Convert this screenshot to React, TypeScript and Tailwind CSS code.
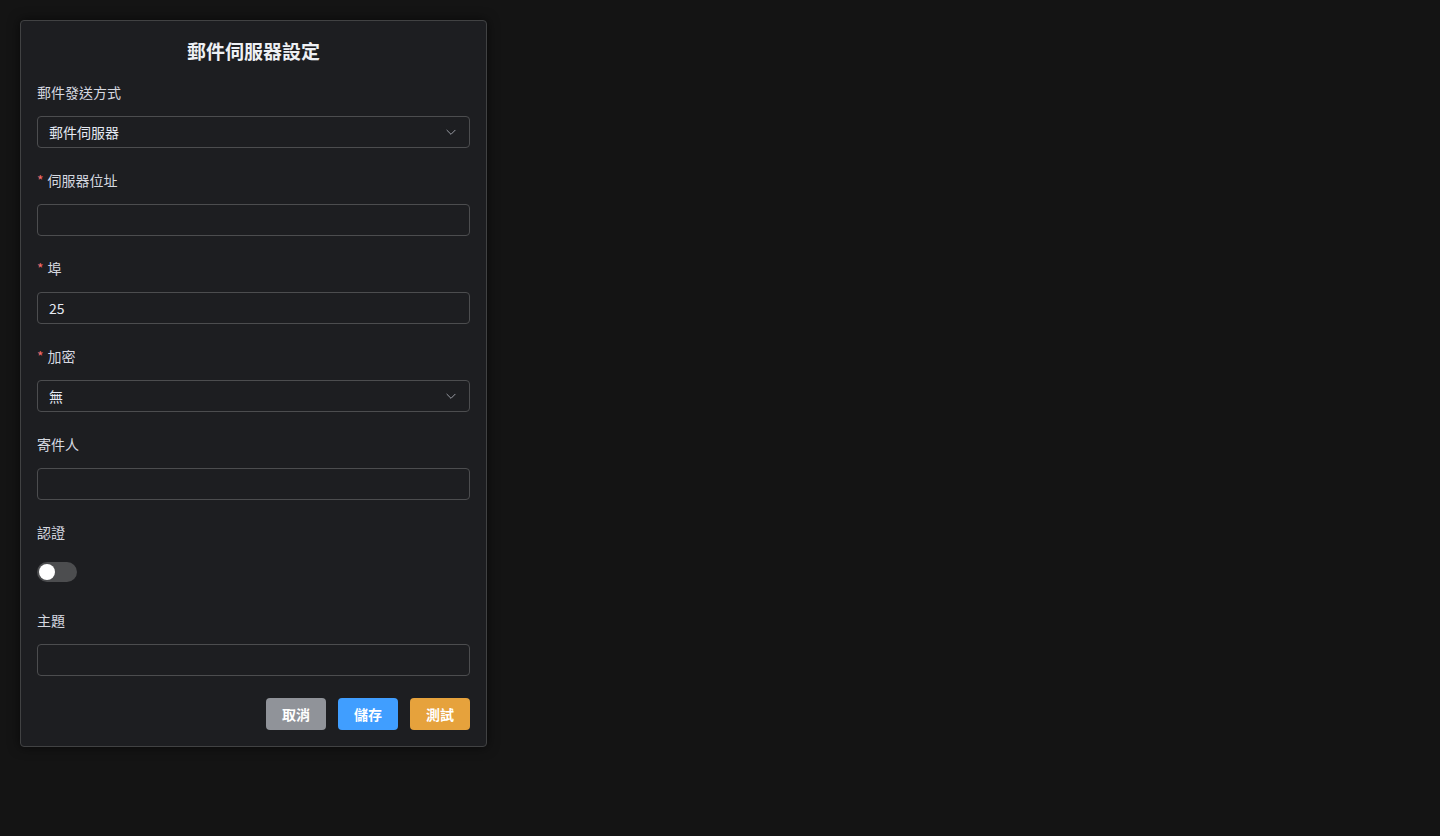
import { useState } from 'react';

const font = { fontFamily: '"Noto Sans CJK TC", "Noto Sans", sans-serif' };

const Label = ({ text, required }: { text: string; required?: boolean }) => (
    <div className="h-[34px] leading-[20px] text-[14px] text-[#d6d9e0]">
        {required && <span className="text-[#f56c6c] mr-[4px]">*</span>}
        {text}
    </div>
);

const Chevron = () => (
    <svg width="14" height="14" viewBox="0 0 24 24" fill="none" stroke="#a3a6ad" strokeWidth="1.6" strokeLinecap="round" strokeLinejoin="round">
        <path d="M5 9l7 7 7-7" />
    </svg>
);

const SelectBox = ({ value }: { value: string }) => (
    <div className="h-[32px] flex items-center justify-between px-[11px] border border-[#4c4d4f] rounded-[4px] text-[14px] leading-[20px] text-[#e5eaf3]">
        <span className="-mt-[1px]">{value}</span>
        <Chevron />
    </div>
);

const TextBox = ({ value = '' }: { value?: string }) => (
    <input
        defaultValue={value}
        className="w-full h-[32px] px-[11px] pb-[1px] bg-transparent border border-[#4c4d4f] rounded-[4px] text-[14px] text-[#e5eaf3] outline-none"
        style={font}
    />
);

const Field = ({ label, required, children, last }: { label: string; required?: boolean; children: React.ReactNode; last?: boolean }) => (
    <div className={last ? '' : 'mb-[22px]'}>
        <Label text={label} required={required} />
        {children}
    </div>
);

export default function App() {
    const [auth, setAuth] = useState(false);

    return (
        <div className="min-h-screen w-full bg-[#141414] p-[20px]" style={font}>
            <div className="w-[467px] bg-[#1d1e21] border border-[#414243] rounded-[4px] shadow-[0_0_12px_rgba(0,0,0,0.6)] px-[16px] pb-[16px]">
                <h2 className="h-[61px] flex items-center justify-center text-[19px] font-bold text-[#eef0f4]">郵件伺服器設定</h2>

                <Field label="郵件發送方式">
                    <SelectBox value="郵件伺服器" />
                </Field>
                <Field label="伺服器位址" required>
                    <TextBox />
                </Field>
                <Field label="埠" required>
                    <TextBox value="25" />
                </Field>
                <Field label="加密" required>
                    <SelectBox value="無" />
                </Field>
                <Field label="寄件人">
                    <TextBox />
                </Field>
                <Field label="認證">
                    <div className="h-[32px] flex items-center">
                        <button
                            onClick={() => setAuth(!auth)}
                            className={`w-[40px] h-[20px] rounded-full flex items-center px-[2px] ${auth ? 'bg-[#409eff] justify-end' : 'bg-[#4c4d4f] justify-start'}`}
                        >
                            <span className="w-[16px] h-[16px] rounded-full bg-white" />
                        </button>
                    </div>
                </Field>
                <Field label="主題" last>
                    <TextBox />
                </Field>

                <div className="flex justify-end gap-[12px] mt-[22px]">
                    <button className="w-[60px] h-[32px] rounded-[4px] bg-[#909399] text-white text-[14px] leading-[20px] font-bold pb-[1px]">取消</button>
                    <button className="w-[60px] h-[32px] rounded-[4px] bg-[#409eff] text-white text-[14px] leading-[20px] font-bold pb-[1px]">儲存</button>
                    <button className="w-[60px] h-[32px] rounded-[4px] bg-[#e6a23c] text-white text-[14px] leading-[20px] font-bold pb-[1px]">測試</button>
                </div>
            </div>
        </div>
    );
}
